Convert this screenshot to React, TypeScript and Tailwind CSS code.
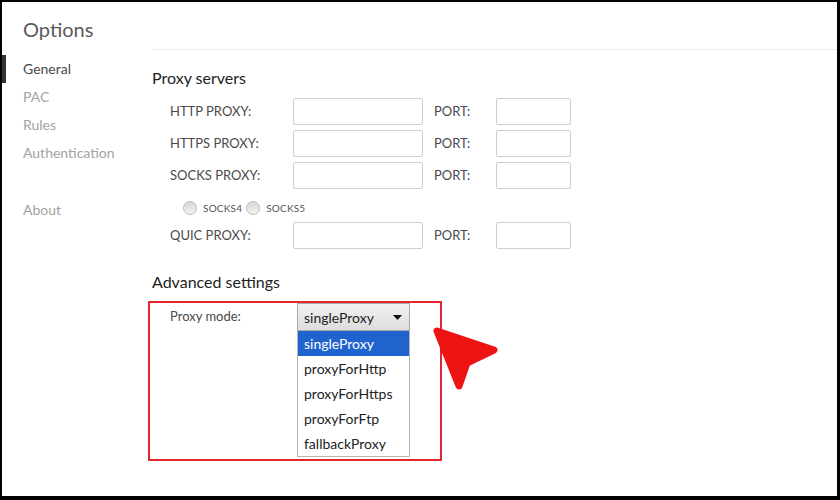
import React from "react";

const font = { fontFamily: "Lato, 'Open Sans', sans-serif" };

function Row({ label }: { label: string }) {
  return (
    <div className="flex items-center h-[27px]">
      <div className="w-[123px] text-[13px] text-[#4a4a4a]">{label}</div>
      <div className="w-[130px] h-[27px] border border-[#cfcfcf] rounded-[2px] bg-white" />
      <div className="w-[73px] pl-[11px] text-[13px] text-[#4a4a4a]">PORT:</div>
      <div className="w-[75px] h-[27px] border border-[#cfcfcf] rounded-[2px] bg-white" />
    </div>
  );
}

function Radio({ label }: { label: string }) {
  return (
    <div className="flex items-center">
      <div className="w-[14px] h-[14px] rounded-full border border-[#bdbdbd] bg-gradient-to-b from-[#d6d6d6] to-[#f4f4f4]" />
      <span className="ml-[6px] mr-[4px] text-[10px] tracking-[0.2px] text-[#555]">{label}</span>
    </div>
  );
}

export default function App() {
  const items = ["singleProxy", "proxyForHttp", "proxyForHttps", "proxyForFtp", "fallbackProxy"];
  return (
    <div className="w-[840px] h-[500px] bg-black pt-[2px] pl-[2px] pr-[3px] pb-[4px]" style={font}>
      <div className="relative flex h-full bg-white">
        <div className="w-[150px] shrink-0">
          <div className="mt-[13px] pl-[21px] h-[28px] leading-[28px] text-[20px] text-[#5a5a5a]">Options</div>
          <div className="mt-[12px] text-[14px]">
            <div className="h-[28px] leading-[28px] border-l-4 border-[#333] pl-[17px] text-[#4a4a4a]">General</div>
            <div className="h-[28px] leading-[28px] pl-[21px] text-[#a3a3a3]">PAC</div>
            <div className="h-[28px] leading-[28px] pl-[21px] text-[#a3a3a3]">Rules</div>
            <div className="h-[28px] leading-[28px] pl-[21px] text-[#a3a3a3]">Authentication</div>
            <div className="mt-[29px] h-[28px] leading-[28px] pl-[21px] text-[#a3a3a3]">About</div>
          </div>
        </div>
        <div className="flex-1 flex flex-col">
          <div className="h-[48px] shrink-0 border-b border-[#eeeeee]" />
          <div className="mt-[16px] h-[24px] leading-[24px] text-[16px] text-[#222]">Proxy servers</div>
          <div className="mt-[8px] pl-[18px] flex flex-col gap-[5px]">
            <Row label="HTTP PROXY:" />
            <Row label="HTTPS PROXY:" />
            <Row label="SOCKS PROXY:" />
          </div>
          <div className="mt-[8px] h-[22px] pl-[31px] flex items-center">
            <Radio label="SOCKS4" />
            <Radio label="SOCKS5" />
          </div>
          <div className="mt-[3px] pl-[18px]">
            <Row label="QUIC PROXY:" />
          </div>
          <div className="mt-[21px] h-[24px] leading-[24px] text-[16px] text-[#222]">Advanced settings</div>
          <div className="mt-[7px] -ml-[4px] w-[294px] h-[160px] border-2 border-[#e3262d] flex">
            <div className="w-[147px] pl-[20px] h-[28px] flex items-center text-[13px] text-[#4a4a4a]">Proxy mode:</div>
            <div className="w-[113px] flex flex-col">
              <div className="h-[28px] border border-[#a9a9a9] bg-gradient-to-b from-[#f2f2f2] to-[#dddddd] flex items-center justify-between pl-[6px] pr-[7px] text-[14px] text-[#222]">
                <span>singleProxy</span>
                <svg width="9" height="5" viewBox="0 0 9 5"><path d="M0 0h9L4.5 5z" fill="#111" /></svg>
              </div>
              <div className="border border-t-0 border-[#b5b5b5] bg-white">
                {items.map((it, i) => (
                  <div
                    key={it}
                    className={
                      i === 0
                        ? "h-[25px] leading-[25px] pl-[6px] text-[14px] bg-[#1f63cf] text-white"
                        : "h-[25px] leading-[25px] pl-[6px] text-[14px] text-[#222]"
                    }
                  >
                    {it}
                  </div>
                ))}
              </div>
            </div>
          </div>
        </div>
        <svg className="absolute left-[426px] top-[320px]" width="76" height="74" viewBox="0 0 76 74">
          <path
            d="M9 9 L66 28 L39 41 L31 64 Z"
            fill="#ef1414"
            stroke="#ef1414"
            strokeWidth="7"
            strokeLinejoin="round"
          />
        </svg>
      </div>
    </div>
  );
}
